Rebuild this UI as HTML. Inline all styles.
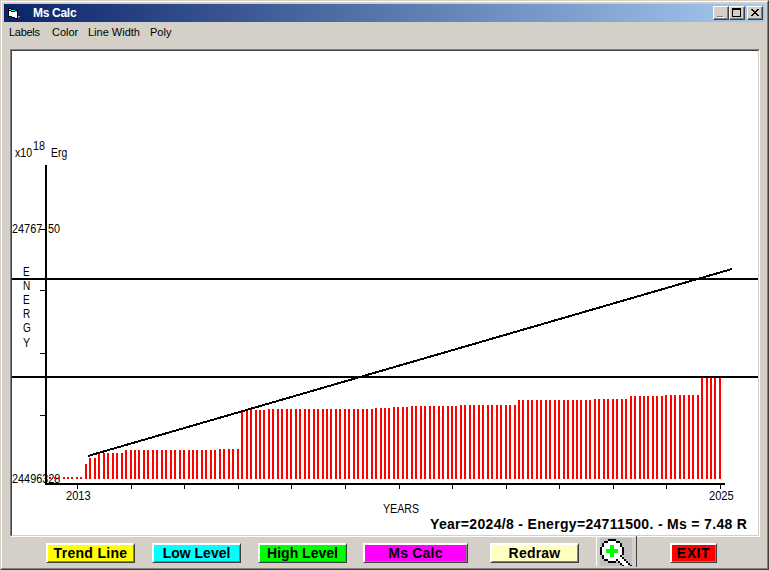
<!DOCTYPE html>
<html><head><meta charset="utf-8">
<style>
*{margin:0;padding:0;box-sizing:border-box}
html,body{width:769px;height:570px;overflow:hidden;background:#D4D0C8}
body{position:relative;font-family:"Liberation Sans",sans-serif;color:#000}
.abs{position:absolute;white-space:nowrap}
svg{position:absolute;left:0;top:0}
.t11{font-size:11px;line-height:13px}
.cb{width:16px;height:14px;background:#D4D0C8;border-top:1px solid #fff;border-left:1px solid #fff;border-right:1px solid #404040;border-bottom:1px solid #404040;box-shadow:inset -1px -1px 0 #808080}
.btn{position:absolute;top:543px;height:20px;border-top:1px solid #fff;border-left:1px solid #fff;border-right:1px solid #404040;border-bottom:1px solid #404040;box-shadow:inset 1px 1px 0 #fff,inset -1px -1px 0 #808080;font-size:14px;line-height:18px;text-align:center;color:#000;white-space:nowrap}
</style></head><body>
<div class="abs" style="left:0;top:0;width:769px;height:570px;border-top:1px solid #D4D0C8;border-left:1px solid #D4D0C8;border-right:1px solid #404040;border-bottom:1px solid #404040"></div>
<div class="abs" style="left:1px;top:1px;width:767px;height:568px;border-top:1px solid #fff;border-left:1px solid #fff;border-right:1px solid #808080;border-bottom:1px solid #808080"></div>
<div class="abs" style="left:4px;top:4px;width:761px;height:18px;background:linear-gradient(to right,#0A246A,#A6CAF0)"></div>
<svg width="769" height="30" style="shape-rendering:crispEdges">
  <path d="M8 8h3v1h-3zM8 9h1v9h-1zM11 9h4v1h-4zM9 10h2v1h-2zM15 10h3v1h-3zM11 11h4v1h-4zM17 11h1v8h-1zM9 16h3v1h-3zM12 17h3v1h-3zM15 18h2v1h-2z" fill="#000"/>
  <path d="M9 9h2v1h-2zM11 10h4v1h-4zM15 11h2v1h-2z" fill="#00FFFF"/>
  <path d="M9 11h2v1h-2zM9 12h8v4h-8zM12 16h5v1h-5zM15 17h2v1h-2z" fill="#fff"/>
  <path d="M18 16h2v1h-2zM18 17h1v1h-1z" fill="#9090A0"/>
</svg>
<div class="abs" style="left:33px;top:6px;font-size:12px;line-height:15px;font-weight:bold;color:#fff;letter-spacing:-0.3px">Ms Calc</div>
<div class="abs cb" style="left:713px;top:6px"></div>
<div class="abs cb" style="left:729px;top:6px"></div>
<div class="abs cb" style="left:747px;top:6px"></div>
<svg width="769" height="30" style="shape-rendering:crispEdges">
  <path d="M718 17h6v1h-6z" fill="#fff"/>
  <path d="M717 16h6v1h-6z" fill="#808080"/>
  <path d="M732 8h9v2h-9zM732 10h1v7h-1zM740 10h1v7h-1zM732 16h9v1h-9z" fill="#000"/>
  <path d="M751 9h2v1h-2zM757 9h2v1h-2zM752 10h2v1h-2zM756 10h2v1h-2zM753 11h4v1h-4zM754 12h2v1h-2zM753 13h4v1h-4zM752 14h2v1h-2zM756 14h2v1h-2zM751 15h2v1h-2zM757 15h2v1h-2z" fill="#000"/>
</svg>
<div class="abs t11" style="left:9px;top:26px;letter-spacing:-0.3px">Labels</div>
<div class="abs t11" style="left:52px;top:26px">Color</div>
<div class="abs t11" style="left:88px;top:26px">Line Width</div>
<div class="abs t11" style="left:150px;top:26px">Poly</div>
<div class="abs" style="left:10px;top:49px;width:750px;height:488px;border-top:1px solid #808080;border-left:1px solid #808080;border-right:1px solid #fff;border-bottom:1px solid #fff"></div>
<div class="abs" style="left:11px;top:50px;width:748px;height:486px;border-top:1px solid #404040;border-left:1px solid #404040;border-right:1px solid #D4D0C8;border-bottom:1px solid #D4D0C8;background:#fff"></div>
<div class="abs" style="left:14.6px;top:146px;font-size:12.5px;line-height:15px;transform:scaleX(0.85);transform-origin:0 0;">x10</div>
<div class="abs" style="left:33px;top:138.7px;font-size:12px;line-height:14px;transform:scaleX(0.9);transform-origin:0 0;">18</div>
<div class="abs" style="left:50.5px;top:146px;font-size:12.5px;line-height:15px;transform:scaleX(0.83);transform-origin:0 0;">Erg</div>
<div class="abs" style="left:12px;top:222px;font-size:12.5px;line-height:15px;transform:scaleX(0.87);transform-origin:0 0;">24767</div>
<div class="abs" style="left:48.2px;top:222px;font-size:12.5px;line-height:15px;transform:scaleX(0.87);transform-origin:0 0;">50</div>
<div class="abs" style="left:12px;top:472px;font-size:12.5px;line-height:15px;transform:scaleX(0.87);transform-origin:0 0;">24496328</div>
<div class="abs" style="left:22.5px;top:265px;font-size:12.5px;line-height:15px;transform:scaleX(0.8);transform-origin:0 0;">E</div>
<div class="abs" style="left:22.5px;top:279px;font-size:12.5px;line-height:15px;transform:scaleX(0.8);transform-origin:0 0;">N</div>
<div class="abs" style="left:22.5px;top:293px;font-size:12.5px;line-height:15px;transform:scaleX(0.8);transform-origin:0 0;">E</div>
<div class="abs" style="left:22.5px;top:307px;font-size:12.5px;line-height:15px;transform:scaleX(0.8);transform-origin:0 0;">R</div>
<div class="abs" style="left:22.5px;top:321px;font-size:12.5px;line-height:15px;transform:scaleX(0.8);transform-origin:0 0;">G</div>
<div class="abs" style="left:22.5px;top:336px;font-size:12.5px;line-height:15px;transform:scaleX(0.85);transform-origin:0 0;">Y</div>
<div class="abs" style="left:66px;top:489px;font-size:12.5px;line-height:15px;transform:scaleX(0.89);transform-origin:0 0;">2013</div>
<div class="abs" style="left:709px;top:489px;font-size:12.5px;line-height:15px;transform:scaleX(0.89);transform-origin:0 0;">2025</div>
<div class="abs" style="left:382.7px;top:502px;font-size:12.5px;line-height:15px;transform:scaleX(0.85);transform-origin:0 0;">YEARS</div>
<div class="abs" style="left:430px;top:516px;font-size:14px;line-height:17px;transform:scaleX(1);transform-origin:0 0;font-weight:bold;letter-spacing:0.32px">Year=2024/8 - Energy=24711500. - Ms = 7.48 R</div>

<svg width="769" height="570" style="shape-rendering:crispEdges">
  <path d="M49 477h2v2h-2zM54 477h2v2h-2zM58 477h2v2h-2zM63 477h2v2h-2zM67 477h2v2h-2zM71 477h2v2h-2zM76 477h2v2h-2zM80 477h2v2h-2zM85 464h2v15h-2zM89 458h2v21h-2zM94 458h2v21h-2zM98 454h2v25h-2zM103 453h2v26h-2zM107 453h2v26h-2zM112 453h2v26h-2zM116 453h2v26h-2zM121 453h2v26h-2zM125 450h2v29h-2zM130 450h2v29h-2zM134 450h2v29h-2zM138 450h2v29h-2zM143 450h2v29h-2zM147 450h2v29h-2zM152 450h2v29h-2zM156 450h2v29h-2zM161 450h2v29h-2zM165 450h2v29h-2zM170 450h2v29h-2zM174 450h2v29h-2zM179 450h2v29h-2zM183 450h2v29h-2zM188 450h2v29h-2zM192 450h2v29h-2zM196 450h2v29h-2zM201 450h2v29h-2zM205 450h2v29h-2zM210 450h2v29h-2zM214 450h2v29h-2zM219 449h2v30h-2zM223 449h2v30h-2zM228 449h2v30h-2zM232 449h2v30h-2zM237 449h2v30h-2zM241 410h2v69h-2zM246 410h2v69h-2zM250 410h2v69h-2zM255 410h2v69h-2zM259 410h2v69h-2zM263 410h2v69h-2zM268 409h2v70h-2zM272 409h2v70h-2zM277 409h2v70h-2zM281 409h2v70h-2zM286 409h2v70h-2zM290 409h2v70h-2zM295 409h2v70h-2zM299 409h2v70h-2zM304 409h2v70h-2zM308 409h2v70h-2zM313 409h2v70h-2zM317 409h2v70h-2zM322 409h2v70h-2zM326 409h2v70h-2zM330 409h2v70h-2zM335 409h2v70h-2zM339 409h2v70h-2zM344 409h2v70h-2zM348 409h2v70h-2zM353 409h2v70h-2zM357 409h2v70h-2zM362 409h2v70h-2zM366 409h2v70h-2zM371 409h2v70h-2zM375 408h2v71h-2zM380 408h2v71h-2zM384 408h2v71h-2zM388 408h2v71h-2zM393 407h2v72h-2zM397 407h2v72h-2zM402 407h2v72h-2zM406 407h2v72h-2zM411 406h2v73h-2zM415 406h2v73h-2zM420 406h2v73h-2zM424 406h2v73h-2zM429 406h2v73h-2zM433 406h2v73h-2zM438 406h2v73h-2zM442 406h2v73h-2zM447 406h2v73h-2zM451 406h2v73h-2zM455 406h2v73h-2zM460 405h2v74h-2zM464 405h2v74h-2zM469 405h2v74h-2zM473 405h2v74h-2zM478 405h2v74h-2zM482 405h2v74h-2zM487 405h2v74h-2zM491 405h2v74h-2zM496 405h2v74h-2zM500 405h2v74h-2zM505 405h2v74h-2zM509 405h2v74h-2zM514 405h2v74h-2zM518 400h2v79h-2zM522 400h2v79h-2zM527 400h2v79h-2zM531 400h2v79h-2zM536 400h2v79h-2zM540 400h2v79h-2zM545 400h2v79h-2zM549 400h2v79h-2zM554 400h2v79h-2zM558 400h2v79h-2zM563 400h2v79h-2zM567 400h2v79h-2zM572 400h2v79h-2zM576 400h2v79h-2zM580 400h2v79h-2zM585 400h2v79h-2zM589 400h2v79h-2zM594 399h2v80h-2zM598 399h2v80h-2zM603 399h2v80h-2zM607 399h2v80h-2zM612 399h2v80h-2zM616 399h2v80h-2zM621 399h2v80h-2zM625 399h2v80h-2zM630 396h2v83h-2zM634 396h2v83h-2zM639 396h2v83h-2zM643 396h2v83h-2zM647 396h2v83h-2zM652 396h2v83h-2zM656 396h2v83h-2zM661 396h2v83h-2zM665 395h2v84h-2zM670 395h2v84h-2zM674 395h2v84h-2zM679 395h2v84h-2zM683 395h2v84h-2zM688 395h2v84h-2zM692 395h2v84h-2zM697 395h2v84h-2zM701 377h2v102h-2zM706 377h2v102h-2zM710 377h2v102h-2zM714 377h2v102h-2zM719 377h2v102h-2z" fill="#FF0000"/>
  <path d="M45 165h2v320h-2zM45 483h680v2h-680zM12 278h746v2h-746zM12 376h746v2h-746z" fill="#000"/>
  <path d="M40 229h5v1h-5zM40 290h5v1h-5zM40 353h5v1h-5zM40 415h5v1h-5z" fill="#000"/>
  <path d="M77 485h1v4h-1zM131 485h1v4h-1zM184 485h1v4h-1zM238 485h1v4h-1zM291 485h1v4h-1zM345 485h1v4h-1zM399 485h1v4h-1zM452 485h1v4h-1zM506 485h1v4h-1zM559 485h1v4h-1zM613 485h1v4h-1zM666 485h1v4h-1zM720 485h1v4h-1z" fill="#000"/>
  <line x1="88" y1="456" x2="732" y2="269" stroke="#000" stroke-width="2"/>
</svg>
<div class="btn" style="left:46px;width:89px;background:#FFFF00;font-weight:bold;letter-spacing:0.3px">Trend Line</div>
<div class="btn" style="left:152px;width:89px;background:#00FFFF;font-weight:bold;letter-spacing:0px">Low Level</div>
<div class="btn" style="left:258px;width:89px;background:#00FF00;font-weight:bold;letter-spacing:0px">High Level</div>
<div class="btn" style="left:363px;width:105px;background:#FF00FF;font-weight:bold;letter-spacing:0.2px">Ms Calc</div>
<div class="btn" style="left:490px;width:89px;background:#FFFFC0;font-weight:bold;letter-spacing:0.2px">Redraw</div>
<div class="btn" style="left:670px;width:47px;background:#FF0000;font-weight:bold;letter-spacing:0.6px">EXIT</div>

<div class="abs" style="left:596px;top:537px;width:1px;height:29px;background:#fff"></div>
<div class="abs" style="left:636px;top:536px;width:1px;height:31px;background:#404040"></div>
<div class="abs" style="left:600px;top:538px;width:32px;height:28px;background:#C0C0C0"></div>
<svg width="769" height="570" style="shape-rendering:crispEdges">
  <path d="M608 541h8v20h-8zM604 543h16v16h-16zM602 547h20v8h-20zM616 557h4v4h-4zM618 559h4v4h-4zM620 561h4v4h-4zM622 559h2v2h-2zM624 561h2v2h-2zM626 563h2v2h-2zM622 563h6v3h-6zM620 557h2v2h-2z" fill="#fff"/>
  <path d="M608 539h8v2h-8zM604 541h4v2h-4zM616 541h4v2h-4zM602 543h2v4h-2zM620 543h2v4h-2zM600 547h2v8h-2zM622 547h2v8h-2zM602 555h2v4h-2zM604 559h4v2h-4zM608 561h8v2h-8zM616 559h2v2h-2zM618 561h2v2h-2zM620 563h2v2h-2zM622 565h2v1h-2zM620 555h2v2h-2zM622 557h2v2h-2zM624 559h2v2h-2zM626 561h2v2h-2zM628 563h2v2h-2zM630 565h2v1h-2z" fill="#000"/>
  <path d="M610 545h4v12h-4zM606 549h12v4h-12z" fill="#00FF00"/>
</svg>
</body></html>
